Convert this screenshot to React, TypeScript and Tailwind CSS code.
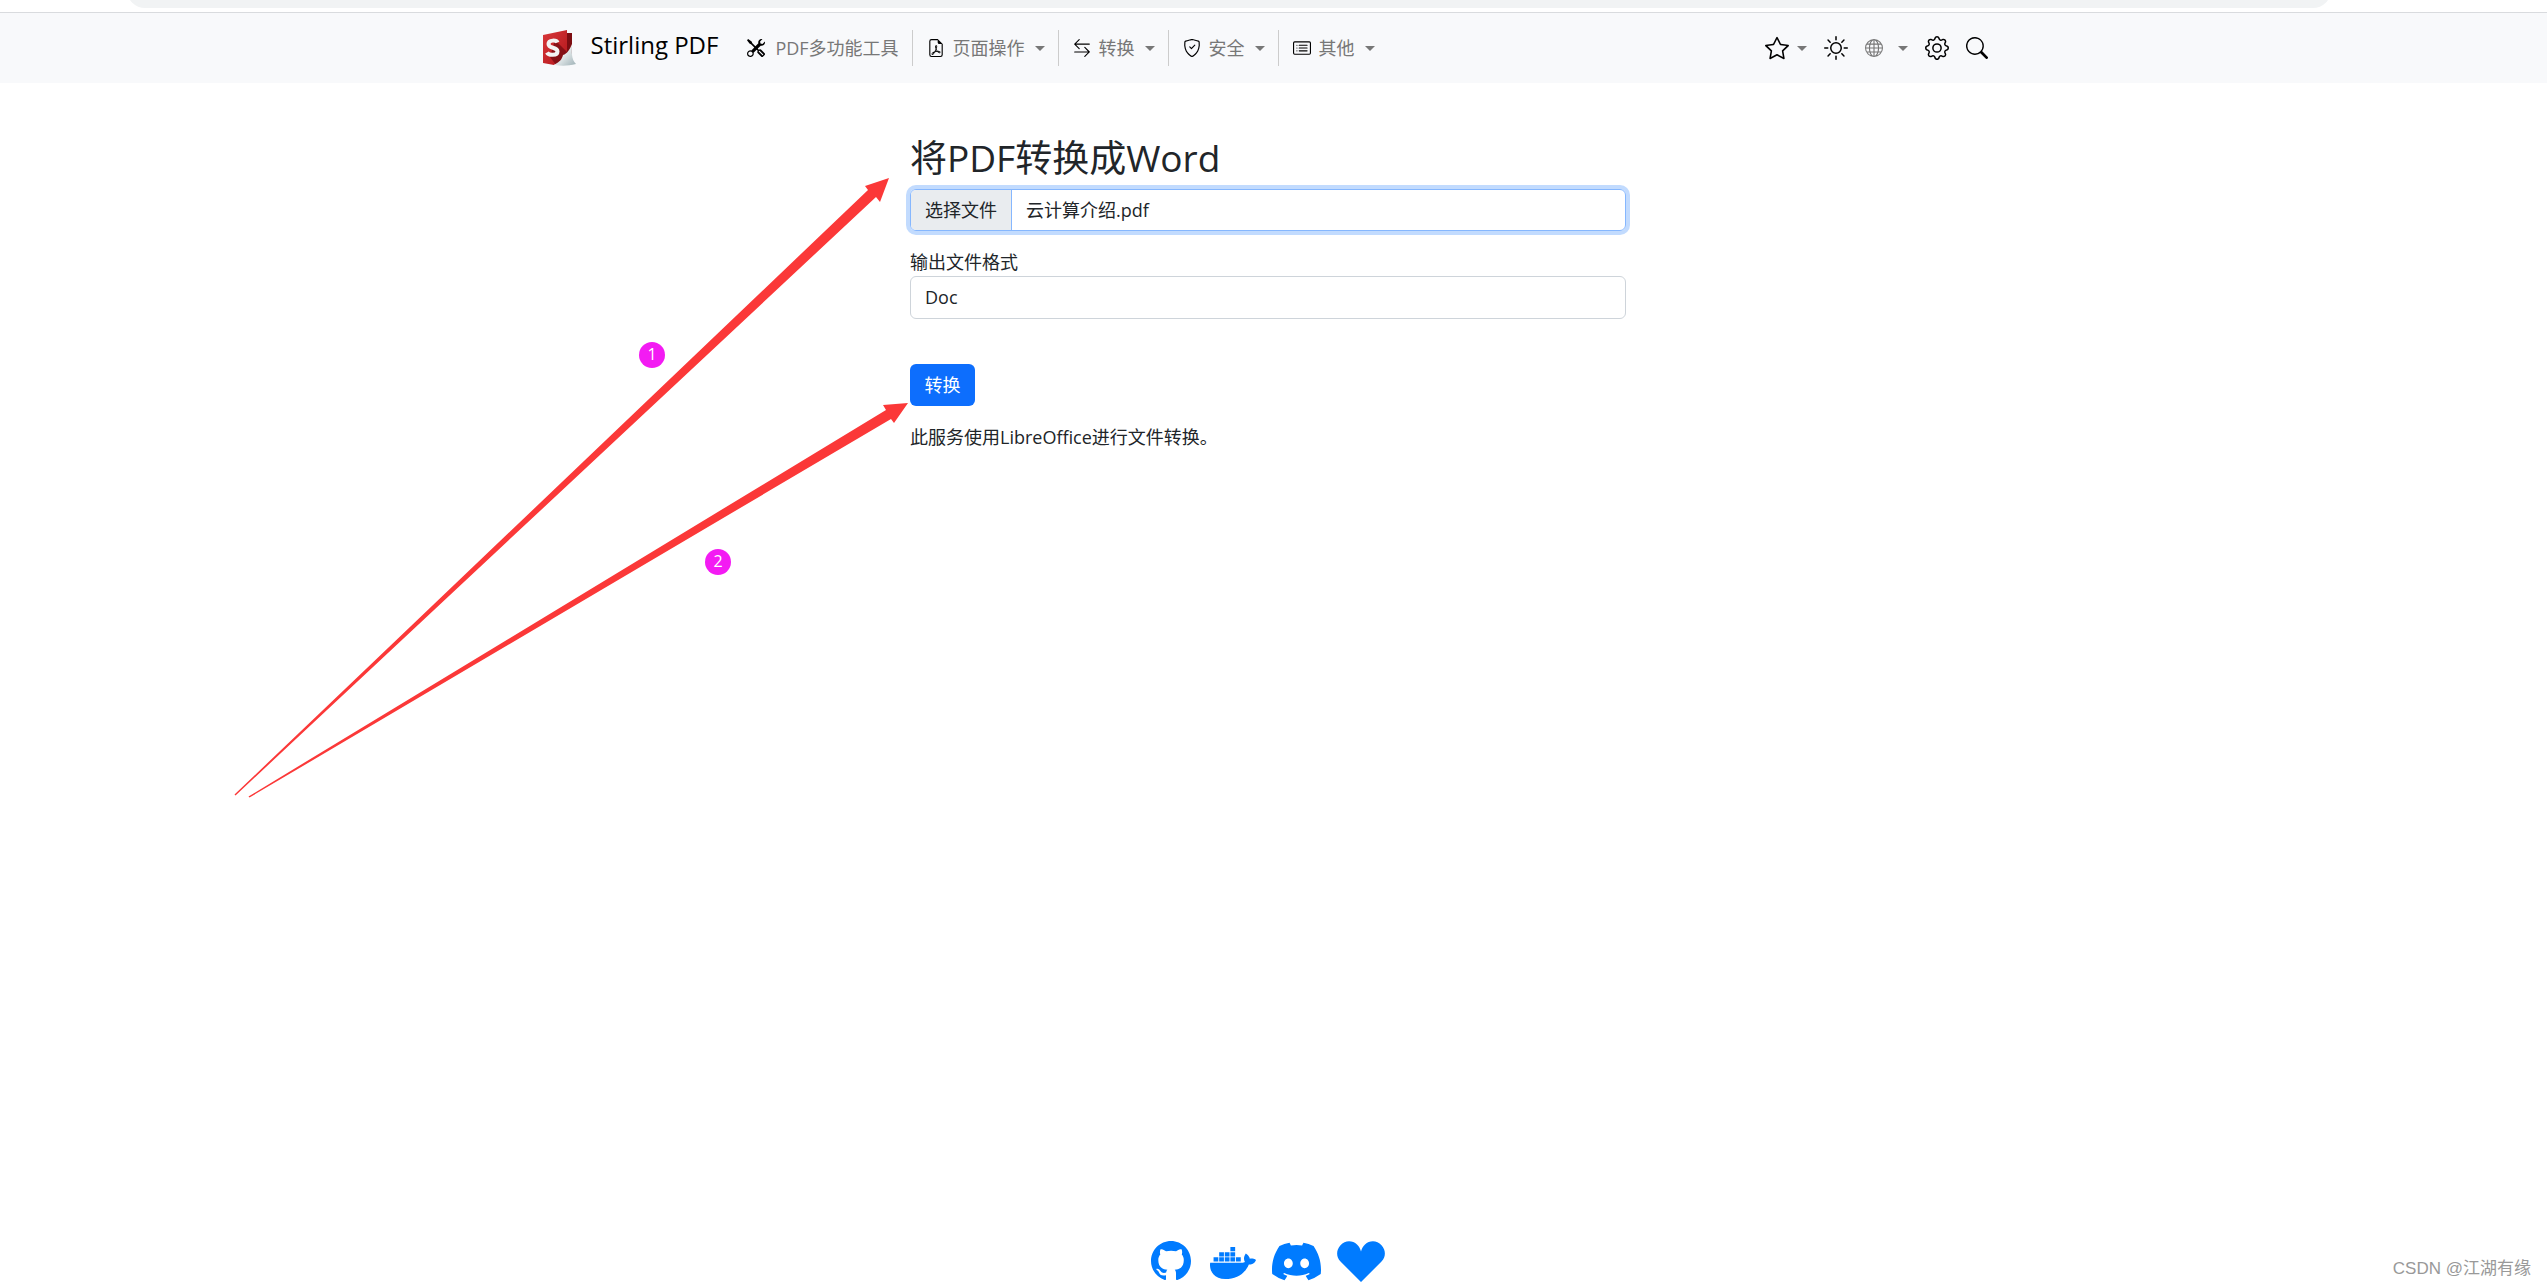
import { useState } from "react";
import type { ReactNode } from "react";
import {
  BsArrowLeftRight,
  BsCardList,
  BsDiscord,
  BsFileEarmarkPdf,
  BsGear,
  BsGithub,
  BsGlobe,
  BsSearch,
  BsShieldCheck,
  BsStar,
  BsSun,
  BsTools,
} from "react-icons/bs";
import { FaDocker } from "react-icons/fa";

const navItems = [
  { name: "页面操作", icon: BsFileEarmarkPdf },
  { name: "转换", icon: BsArrowLeftRight },
  { name: "安全", icon: BsShieldCheck },
  { name: "其他", icon: BsCardList },
];

function Logo() {
  return (
    <svg className="h-9 w-9" viewBox="0 0 36 36" aria-hidden="true">
      <defs>
        <linearGradient id="cover" x1="0" y1="0" x2="1" y2="1">
          <stop offset="0" stopColor="#d8383a" />
          <stop offset="1" stopColor="#b3161b" />
        </linearGradient>
        <linearGradient id="curl" x1="0" y1="0" x2="1" y2="1">
          <stop offset="0.3" stopColor="#ffffff" />
          <stop offset="1" stopColor="#9db0b5" />
        </linearGradient>
      </defs>
      <path d="M24 3l6 0v26l-6 3z" fill="#7d0d12" />
      <path d="M1 5L25 0v26l-13 9L1 33z" fill="url(#cover)" />
      <path d="M13 10l12 12v5l-11 8-6-8z" fill="#6d0a0f" opacity="0.7" />
      <path d="M12 35c6-3 8-6 9-10 4-1 7-6 9-11 0 9-1 15 4 20-8 2-14 2-22 1z" fill="url(#curl)" />
      <path
        d="M15.500 12.500c-1-2.500-9-3-9 1.500 0 5 9 2.500 9 7.500 0 4.500-9 4-10.500 1"
        fill="none"
        stroke="#f3f3f3"
        strokeWidth="4"
      />
    </svg>
  );
}

function Caret() {
  return (
    <svg className="h-[5px] w-2.5 text-[#777]" viewBox="0 0 10 5" aria-hidden="true">
      <path d="M0 0h10L5 5z" fill="currentColor" />
    </svg>
  );
}

function IconButton({ label, children }: { label: string; children: ReactNode }) {
  return (
    <button type="button" aria-label={label} className="flex items-center">
      {children}
    </button>
  );
}

function Header() {
  return (
    <header>
      <div className="h-3 overflow-hidden">
        <div className="-mt-7 mr-[216px] ml-[127px] h-9 rounded-full bg-[#f1f3f4]" />
      </div>
      <nav className="flex h-[71px] justify-center border-t border-[#d9dbde] bg-[#f8f9fb] pr-[18px]">
        <div className="flex w-[1446px] items-center">
          <a href="/" className="flex items-center gap-[13px] text-2xl text-black">
            <Logo />
            <span className="pb-1.5">Stirling PDF</span>
          </a>
          <a href="/multi-tool" className="ml-[29px] flex h-9 items-center gap-2.5 pr-[13px] text-[#777]">
            <BsTools className="size-[18px] text-black" />
            PDF多功能工具
          </a>
          {navItems.map((item) => (
            <button
              key={item.name}
              type="button"
              className="flex h-9 items-center border-l border-[#ccc] pr-[13px] pl-3.5 text-[#777]"
            >
              <item.icon className="mr-2 size-[18px] text-black" />
              {item.name}
              <span className="ml-2.5">
                <Caret />
              </span>
            </button>
          ))}
          <div className="ml-auto flex items-center gap-[17px] text-black">
            <IconButton label="收藏">
              <BsStar className="mr-2 size-6" />
              <Caret />
            </IconButton>
            <IconButton label="主题">
              <BsSun className="size-6" />
            </IconButton>
            <IconButton label="语言">
              <BsGlobe className="mr-[15px] size-[18px] text-[#777]" />
              <Caret />
            </IconButton>
            <IconButton label="设置">
              <BsGear className="size-6" />
            </IconButton>
            <IconButton label="搜索">
              <BsSearch className="size-[22px]" />
            </IconButton>
          </div>
        </div>
      </nav>
    </header>
  );
}

function ConvertForm() {
  const [fileName, setFileName] = useState("云计算介绍.pdf");

  return (
    <main className="flex flex-1 justify-center pt-[54px] pr-[11px]">
      <form className="w-[716px]" onSubmit={(e) => e.preventDefault()}>
        <h1 className="mb-2.5 text-[37px] leading-[42px]">将PDF转换成Word</h1>
        <label className="flex h-[42px] cursor-pointer overflow-hidden rounded-md border border-[#86b7fe] ring-4 ring-[#c2dbfe]">
          <input
            type="file"
            className="sr-only"
            onChange={(e) => setFileName(e.target.files?.[0]?.name ?? fileName)}
          />
          <span className="flex items-center border-r border-[#86b7fe] bg-[#e9ecef] px-3.5">选择文件</span>
          <span className="flex items-center px-3.5">{fileName}</span>
        </label>
        <label htmlFor="format" className="mt-[18px] block">
          输出文件格式
        </label>
        <select
          id="format"
          defaultValue="doc"
          className="block h-[43px] w-full appearance-none rounded-md border border-[#ced4da] bg-white px-3.5"
        >
          <option value="doc">Doc</option>
          <option value="docx">DocX</option>
          <option value="odt">ODT</option>
        </select>
        <button type="submit" className="mt-[45px] h-[42px] w-[65px] rounded-md bg-[#0d6efd] text-white">
          转换
        </button>
        <p className="mt-[18px]">此服务使用LibreOffice进行文件转换。</p>
      </form>
    </main>
  );
}

function Footer() {
  return (
    <footer className="flex items-end">
      <div className="flex-1 pl-[5px]" />
      <div className="flex h-[50px] items-center gap-4 text-[#007bff]">
        <a href="#github" aria-label="GitHub">
          <BsGithub className="size-10" />
        </a>
        <a href="#docker" aria-label="Docker" className="pt-1 pl-[3px]">
          <FaDocker className="h-11 w-[46px]" />
        </a>
        <a href="#discord" aria-label="Discord">
          <BsDiscord className="size-[49px]" />
        </a>
        <a href="#sponsor" aria-label="Sponsor">
          <svg className="h-[41px] w-12" viewBox="0 0 48 41" fill="currentColor">
            <path d="M24 41L3.500 20.500C-1 16-1 9 3.500 4.200 8-1 15.500-1 20 3.500c2 2 3.500 4.500 4 7 .5-2.500 2-5 4-7 4.500-4.500 12-4.500 16.500.7C49 9 49 16 44.500 20.500z" />
          </svg>
        </a>
      </div>
      <div className="flex-1 pr-4 pb-1 text-right font-['Liberation_Sans','Noto_Sans_CJK_SC',sans-serif] text-[17px] text-[#999]">
        CSDN @江湖有缘
      </div>
    </footer>
  );
}

function Annotations() {
  return (
    <svg className="pointer-events-none absolute top-0 left-0 h-[820px] w-[920px]" viewBox="0 0 920 820">
      <g fill="#fb3838">
        <path d="M234.500 794.500L868 190l-3-4 24-8-9 24-4-5L235.500 795.500z" />
        <path d="M248.500 796.500L886 410l-3-5 25-2-14 20-3-4L249.500 797.500z" />
      </g>
      <g fill="#f31bf3">
        <circle cx="652" cy="355" r="13" />
        <circle cx="718" cy="562" r="13" />
      </g>
      <g className="text-base" fill="#fff" textAnchor="middle">
        <text x="652" y="360">1</text>
        <text x="718" y="567">2</text>
      </g>
    </svg>
  );
}

export default function App() {
  return (
    <div className="relative flex min-h-screen flex-col bg-white font-['Open_Sans','Noto_Sans_CJK_SC',sans-serif] text-[18px] leading-[27px] text-[#212529]">
      <Header />
      <ConvertForm />
      <Footer />
      <Annotations />
    </div>
  );
}
